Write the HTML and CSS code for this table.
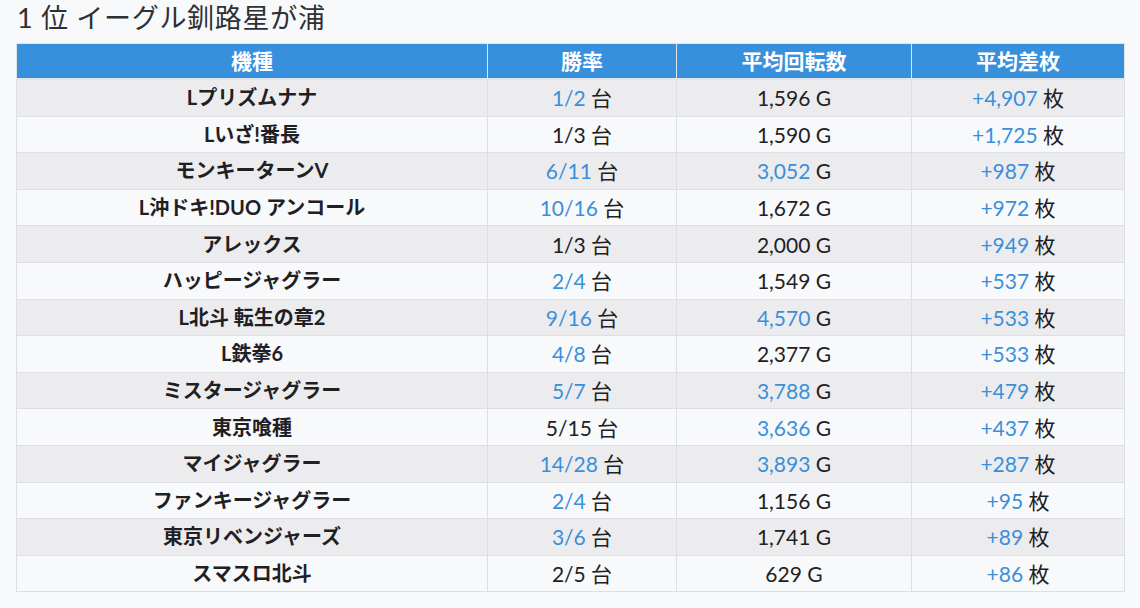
FILE: index.html
```html
<!DOCTYPE html>
<html lang="ja">
<head>
<meta charset="utf-8">
<link rel="stylesheet" href="styles.css">
</head>
<body>
<div class="page">
  <h2 class="title">1 位 イーグル釧路星が浦</h2>
  <table class="rank">
    <colgroup>
      <col class="c1"><col class="c2"><col class="c3"><col class="c4">
    </colgroup>
    <thead>
      <tr><th>機種</th><th>勝率</th><th>平均回転数</th><th>平均差枚</th></tr>
    </thead>
    <tbody>
      <tr><td class="name">Lプリズムナナ</td><td><span class="hi">1/2</span> 台</td><td>1,596 G</td><td><span class="hi">+4,907</span> 枚</td></tr>
      <tr><td class="name">Lいざ!番長</td><td>1/3 台</td><td>1,590 G</td><td><span class="hi">+1,725</span> 枚</td></tr>
      <tr><td class="name">モンキーターンV</td><td><span class="hi">6/11</span> 台</td><td><span class="hi">3,052</span> G</td><td><span class="hi">+987</span> 枚</td></tr>
      <tr><td class="name">L沖ドキ!DUO アンコール</td><td><span class="hi">10/16</span> 台</td><td>1,672 G</td><td><span class="hi">+972</span> 枚</td></tr>
      <tr><td class="name">アレックス</td><td>1/3 台</td><td>2,000 G</td><td><span class="hi">+949</span> 枚</td></tr>
      <tr><td class="name">ハッピージャグラー</td><td><span class="hi">2/4</span> 台</td><td>1,549 G</td><td><span class="hi">+537</span> 枚</td></tr>
      <tr><td class="name">L北斗 転生の章2</td><td><span class="hi">9/16</span> 台</td><td><span class="hi">4,570</span> G</td><td><span class="hi">+533</span> 枚</td></tr>
      <tr><td class="name">L鉄拳6</td><td><span class="hi">4/8</span> 台</td><td>2,377 G</td><td><span class="hi">+533</span> 枚</td></tr>
      <tr><td class="name">ミスタージャグラー</td><td><span class="hi">5/7</span> 台</td><td><span class="hi">3,788</span> G</td><td><span class="hi">+479</span> 枚</td></tr>
      <tr><td class="name">東京喰種</td><td>5/15 台</td><td><span class="hi">3,636</span> G</td><td><span class="hi">+437</span> 枚</td></tr>
      <tr><td class="name">マイジャグラー</td><td><span class="hi">14/28</span> 台</td><td><span class="hi">3,893</span> G</td><td><span class="hi">+287</span> 枚</td></tr>
      <tr><td class="name">ファンキージャグラー</td><td><span class="hi">2/4</span> 台</td><td>1,156 G</td><td><span class="hi">+95</span> 枚</td></tr>
      <tr><td class="name">東京リベンジャーズ</td><td><span class="hi">3/6</span> 台</td><td>1,741 G</td><td><span class="hi">+89</span> 枚</td></tr>
      <tr><td class="name">スマスロ北斗</td><td>2/5 台</td><td>629 G</td><td><span class="hi">+86</span> 枚</td></tr>
    </tbody>
  </table>
</div>
</body>
</html>
```

FILE: styles.css
```css
html, body {
  margin: 0;
  padding: 0;
  background: #f8f9fb;
}
body {
  font-family: "Lato", "Noto Sans CJK JP", sans-serif;
  color: #1f2023;
}
.page {
  padding: 0 16px;
}
.title {
  margin: 0;
  padding-top: 0;
  font-size: 27px;
  letter-spacing: 0.7px;
  line-height: 35px;
  font-weight: 400;
  color: #2f3033;
  padding-left: 1px;
  margin-bottom: 8px;
}
.rank {
  width: 1108px;
  border-collapse: collapse;
  table-layout: fixed;
  font-size: 21px;
}
.c1 { width: 471px; }
.c2 { width: 189px; }
.c3 { width: 235px; }
.c4 { width: 213px; }
.rank th {
  background: #3790dc;
  color: #fff;
  font-weight: 700;
  font-size: 21px;
  line-height: 26px;
  padding: 4px 8px 4px;
  border: 1px solid #dfe3ea;
  border-bottom: 2px solid #dfe3ea;
  text-align: center;
}
.rank td {
  text-align: center;
  line-height: 27px;
  padding: 4.3px 8px;
  border: 1px solid #dcdfe4;
}
.rank tbody tr:nth-child(odd) td {
  background: #ececee;
}
.rank tbody tr:nth-child(even) td {
  background: #f8f9fb;
}
.rank .name {
  font-weight: 700;
  font-size: 20px;
}
.hi {
  color: #3a8fdb;
}
```
